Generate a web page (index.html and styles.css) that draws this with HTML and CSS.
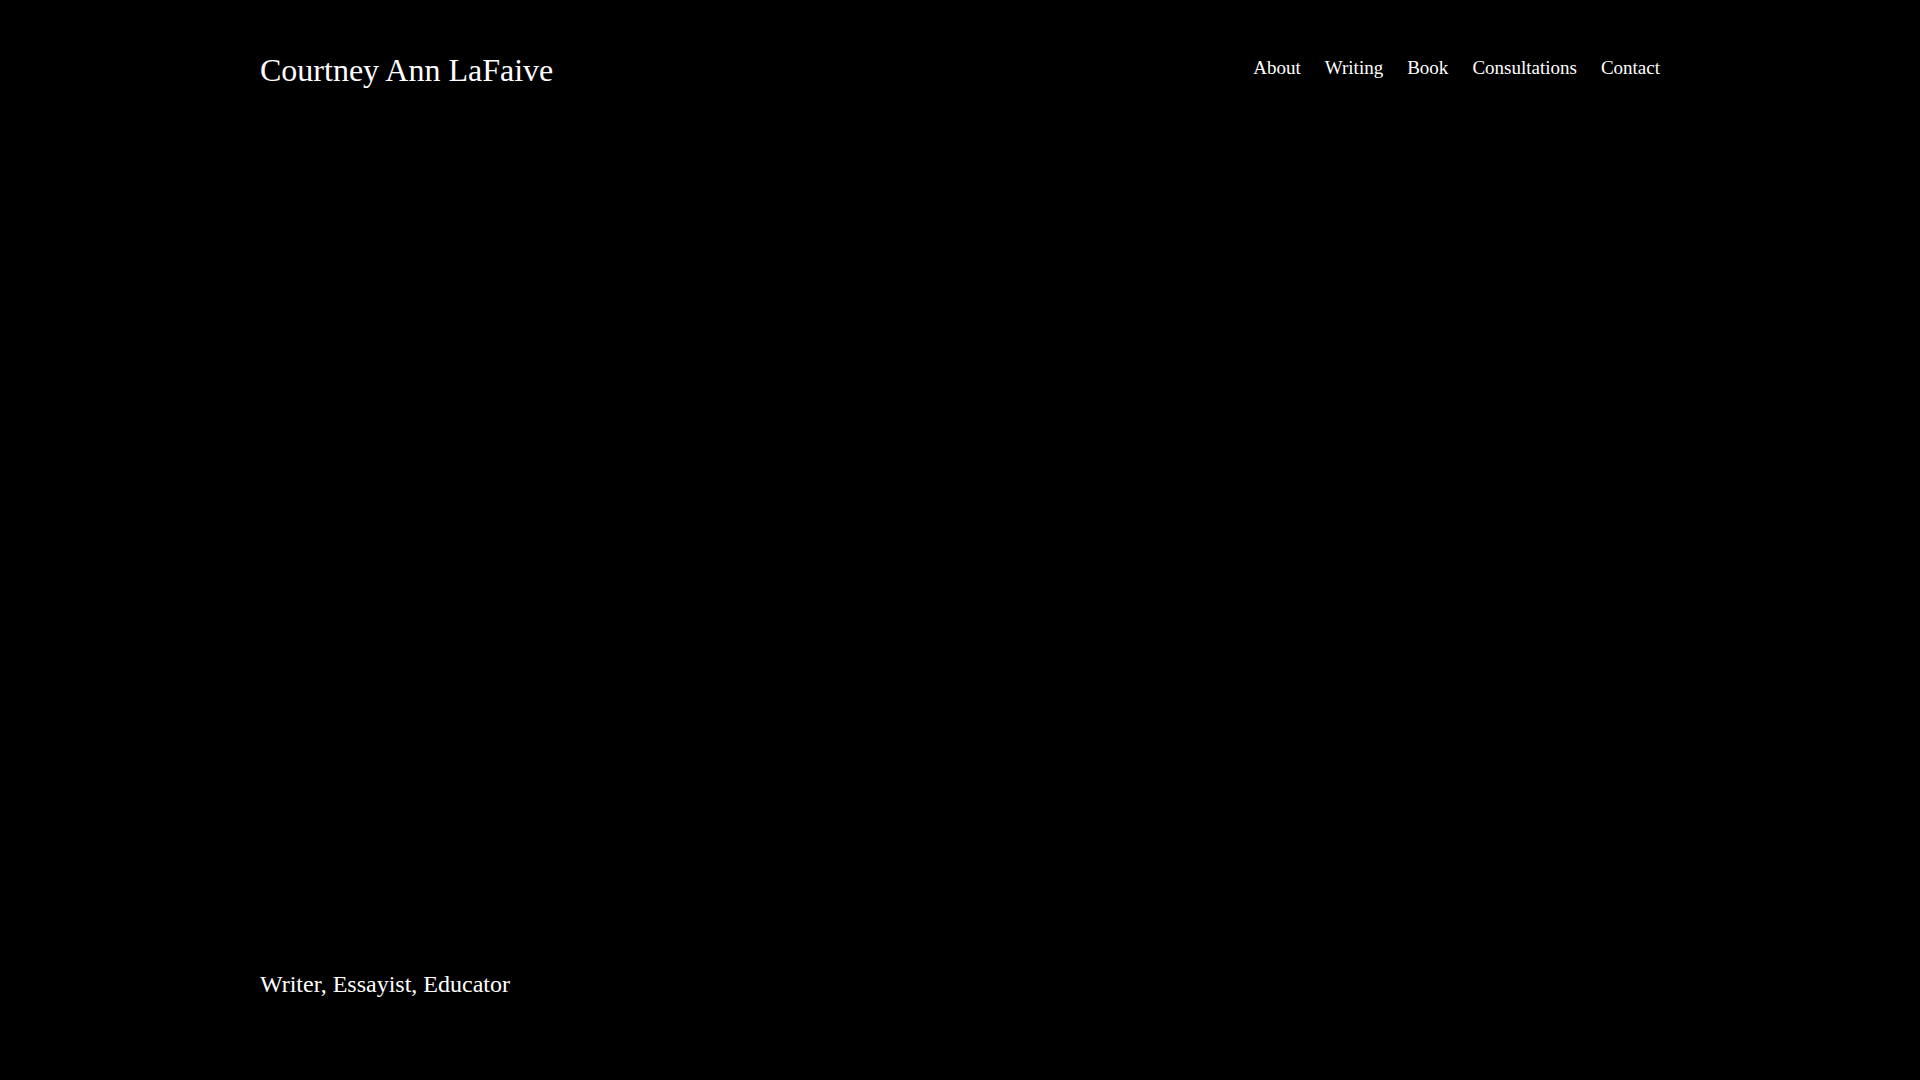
FILE: index.html
```html
<!DOCTYPE html>
<html lang="en">
<head>
<meta charset="utf-8">
<title>Courtney Ann LaFaive</title>
<link rel="stylesheet" href="styles.css">
</head>
<body>
<div class="page">
  <header class="site-header">
    <a class="site-title" href="#">Courtney Ann LaFaive</a>
    <nav class="site-nav">
      <a href="#">About</a>
      <a href="#">Writing</a>
      <a href="#">Book</a>
      <a href="#">Consultations</a>
      <a href="#">Contact</a>
    </nav>
  </header>
  <main class="hero">
    <p class="tagline">Writer, Essayist, Educator</p>
  </main>
</div>
</body>
</html>
```
FILE: styles.css
```css
html, body {
  margin: 0;
  padding: 0;
  background: #000;
  color: #fff;
  font-family: "Liberation Serif", "Times New Roman", serif;
}
a {
  color: #fff;
  text-decoration: none;
}
.page {
  min-height: 100vh;
  display: flex;
  flex-direction: column;
  width: 1400px;
  margin: 0 auto;
}
.site-header {
  display: flex;
  justify-content: space-between;
  align-items: flex-start;
  padding-top: 52px;
}
.site-title {
  font-size: 32px;
  line-height: 1.15;
}
.site-nav {
  display: flex;
  gap: 24px;
  font-size: 19px;
  line-height: 1.15;
  padding-top: 5px;
}
.hero {
  flex: 1;
  display: flex;
  align-items: flex-end;
  padding-bottom: 81px;
}
.tagline {
  margin: 0;
  font-size: 24px;
  line-height: 1.15;
}
```
